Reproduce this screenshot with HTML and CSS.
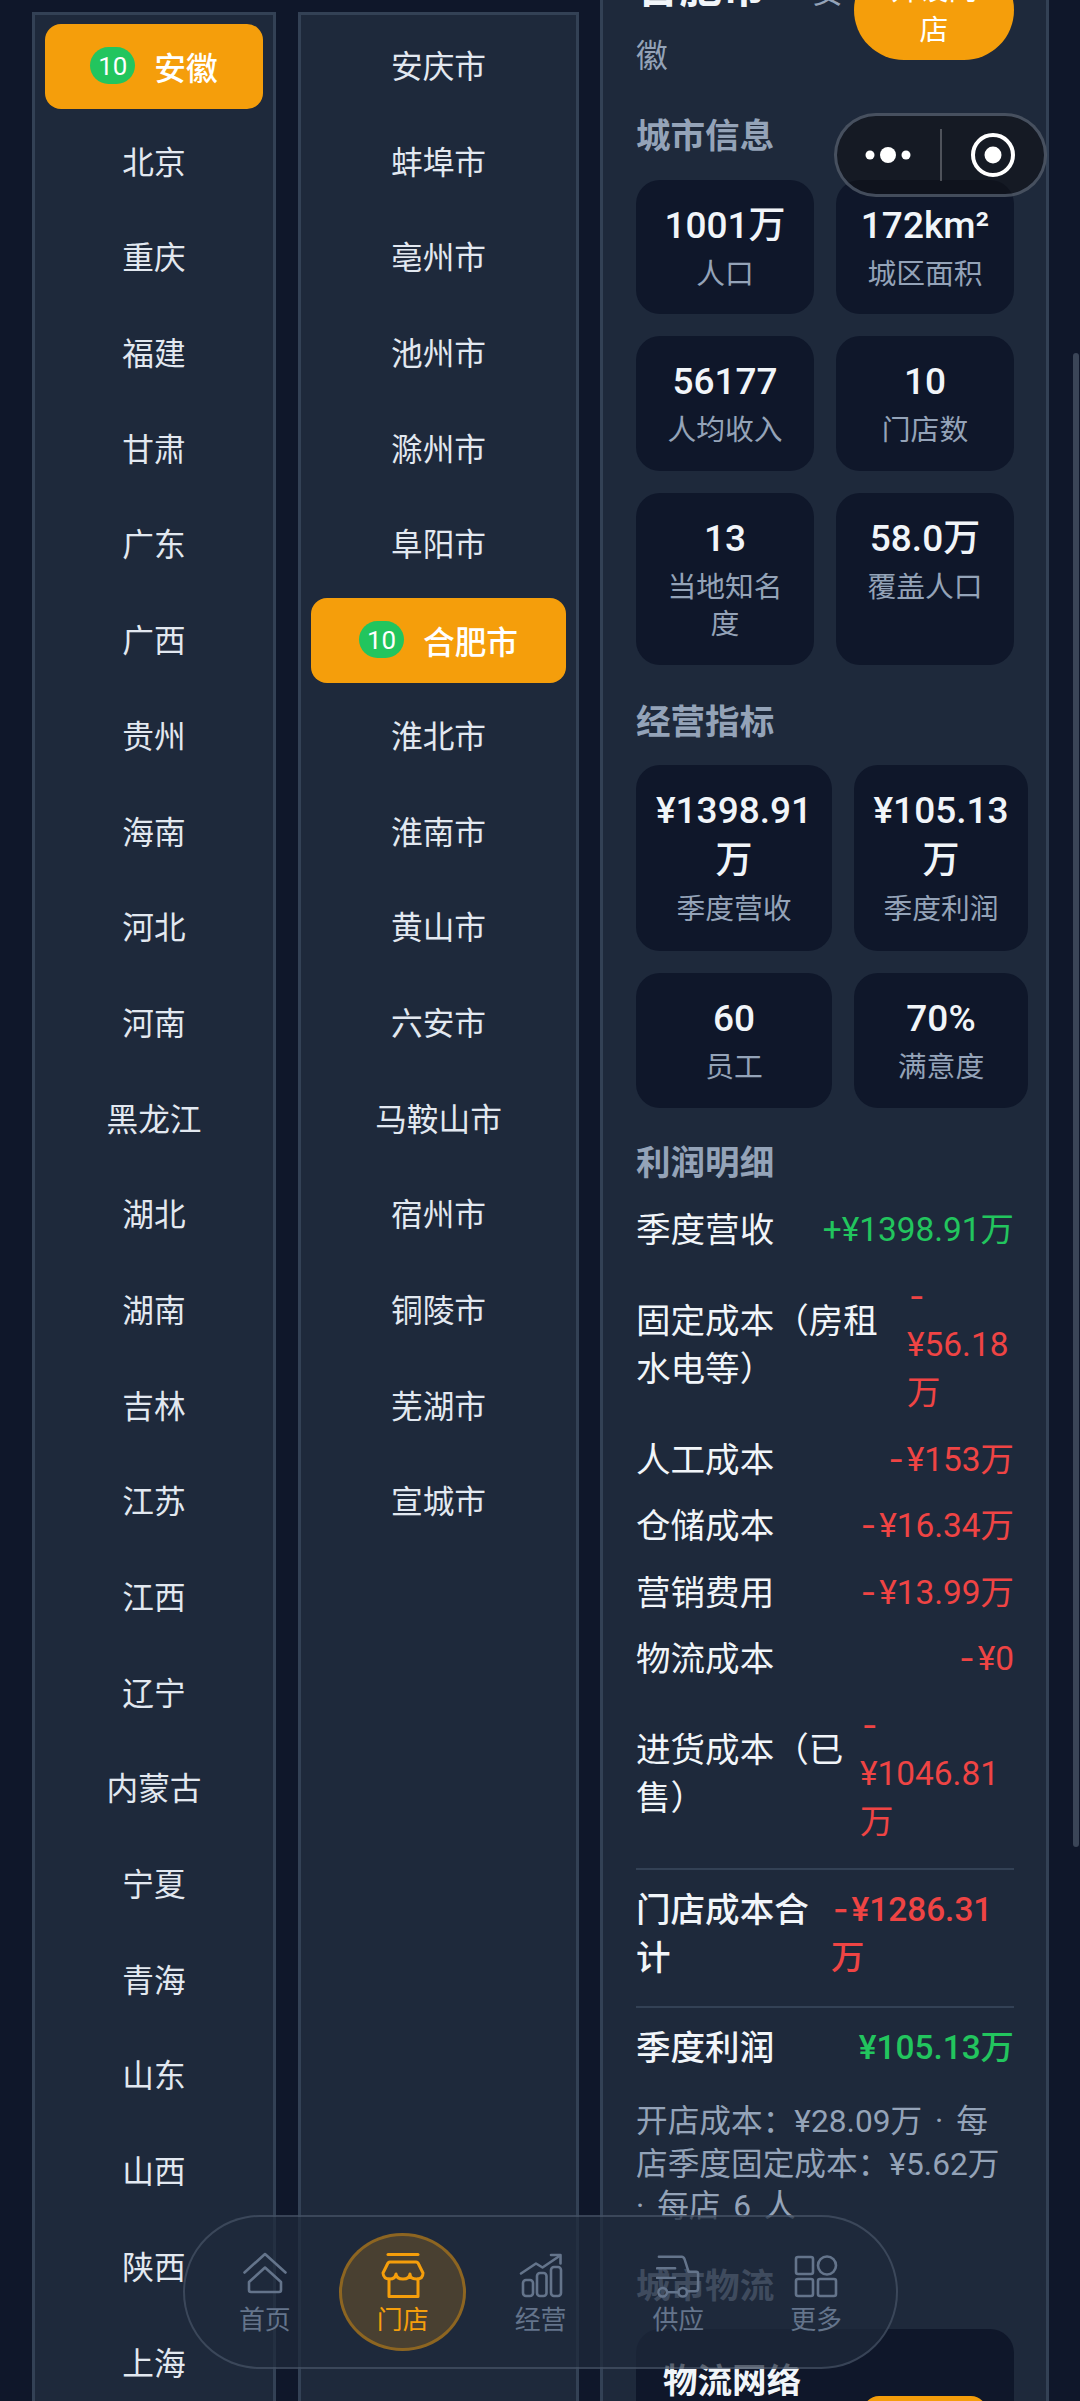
FILE: index.html
```html
<!DOCTYPE html>
<html lang="zh-CN">
<head>
<meta charset="UTF-8">
<meta name="viewport" content="width=device-width, initial-scale=1.0">
<title>门店</title>
<link rel="stylesheet" href="styles.css">
</head>
<body>
<div class="page">
    <div class="columns">
        <div class="col col-province">
            <div class="item active"><span class="badge">10</span>安徽</div>
            <div class="item">北京</div>
            <div class="item">重庆</div>
            <div class="item">福建</div>
            <div class="item">甘肃</div>
            <div class="item">广东</div>
            <div class="item">广西</div>
            <div class="item">贵州</div>
            <div class="item">海南</div>
            <div class="item">河北</div>
            <div class="item">河南</div>
            <div class="item">黑龙江</div>
            <div class="item">湖北</div>
            <div class="item">湖南</div>
            <div class="item">吉林</div>
            <div class="item">江苏</div>
            <div class="item">江西</div>
            <div class="item">辽宁</div>
            <div class="item">内蒙古</div>
            <div class="item">宁夏</div>
            <div class="item">青海</div>
            <div class="item">山东</div>
            <div class="item">山西</div>
            <div class="item">陕西</div>
            <div class="item">上海</div>
        </div>
        <div class="col col-city">
            <div class="item">安庆市</div>
            <div class="item">蚌埠市</div>
            <div class="item">亳州市</div>
            <div class="item">池州市</div>
            <div class="item">滁州市</div>
            <div class="item">阜阳市</div>
            <div class="item active"><span class="badge">10</span>合肥市</div>
            <div class="item">淮北市</div>
            <div class="item">淮南市</div>
            <div class="item">黄山市</div>
            <div class="item">六安市</div>
            <div class="item">马鞍山市</div>
            <div class="item">宿州市</div>
            <div class="item">铜陵市</div>
            <div class="item">芜湖市</div>
            <div class="item">宣城市</div>
        </div>
        <div class="detail">
            <div class="detail-inner">
                <div class="shop-head">
                    <div class="shop-title"><span class="city-name">合肥市</span><span class="province">安 徽</span></div>
                    <button class="open-btn">开设门店</button>
                </div>

                <div class="section-title">城市信息</div>
                <div class="stats stats-city">
                    <div class="stat"><div class="stat-value">1001万</div><div class="stat-label">人口</div></div>
                    <div class="stat"><div class="stat-value">172km²</div><div class="stat-label">城区面积</div></div>
                    <div class="stat"><div class="stat-value">56177</div><div class="stat-label">人均收入</div></div>
                    <div class="stat"><div class="stat-value">10</div><div class="stat-label">门店数</div></div>
                    <div class="stat"><div class="stat-value">13</div><div class="stat-label">当地知名度</div></div>
                    <div class="stat"><div class="stat-value">58.0万</div><div class="stat-label">覆盖人口</div></div>
                </div>

                <div class="section-title">经营指标</div>
                <div class="stats stats-business">
                    <div class="stat"><div class="stat-value">¥1398.91<br>万</div><div class="stat-label">季度营收</div></div>
                    <div class="stat"><div class="stat-value">¥105.13<br>万</div><div class="stat-label">季度利润</div></div>
                    <div class="stat"><div class="stat-value">60</div><div class="stat-label">员工</div></div>
                    <div class="stat"><div class="stat-value">70%</div><div class="stat-label">满意度</div></div>
                </div>

                <div class="section-title profit-title">利润明细</div>
                <div class="row"><span>季度营收</span><span class="val green">+¥1398.91万</span></div>
                <div class="row wrap"><span>固定成本（房租<br>水电等）</span><span class="val red w-sm"><span class="dash">-</span><br>¥56.18<br>万</span></div>
                <div class="row"><span>人工成本</span><span class="val red"><span class="dash">-</span>¥153万</span></div>
                <div class="row"><span>仓储成本</span><span class="val red"><span class="dash">-</span>¥16.34万</span></div>
                <div class="row"><span>营销费用</span><span class="val red"><span class="dash">-</span>¥13.99万</span></div>
                <div class="row"><span>物流成本</span><span class="val red"><span class="dash">-</span>¥0</span></div>
                <div class="row wrap"><span>进货成本（已<br>售）</span><span class="val red w-md"><span class="dash">-</span><br>¥1046.81<br>万</span></div>
                <div class="row total"><span>门店成本合<br>计</span><span class="val red w-lg"><span class="dash">-</span>¥1286.31<br>万</span></div>
                <div class="row total profit"><span>季度利润</span><span class="val green">¥105.13万</span></div>
                <div class="note">开店成本：¥28.09万 · 每店季度固定成本：¥5.62万 · 每店 6 人</div>

                <div class="section-title logistics-title">城市物流</div>
                <div class="logistics">
                    <span class="logistics-name">物流网络</span>
                    <button class="logistics-btn"></button>
                </div>
            </div>
        </div>
    </div>

    <div class="scrollbar"></div>

    <div class="capsule">
        <div class="capsule-part">
            <svg width="56" height="24" viewBox="0 0 56 24"><circle cx="10" cy="12" r="4.5" fill="#fff"/><circle cx="28" cy="12" r="8" fill="#fff"/><circle cx="46" cy="12" r="4.5" fill="#fff"/></svg>
        </div>
        <div class="capsule-line"></div>
        <div class="capsule-part">
            <svg width="46" height="46" viewBox="0 0 46 46"><circle cx="23" cy="23" r="20" fill="none" stroke="#fff" stroke-width="4"/><circle cx="23" cy="23" r="8.5" fill="#fff"/></svg>
        </div>
    </div>

    <div class="nav">
        <div class="tab">
            <svg class="tab-icon" viewBox="0 0 44 46"><path d="M1.5 20.5 22 2l20.5 18.5"/><path d="M8 40h28a2 2 0 0 0 2-2v-8L22 15.5 6 30v8a2 2 0 0 0 2 2z"/></svg>
            <span>首页</span>
        </div>
        <div class="tab on">
            <svg class="tab-icon" viewBox="0 0 44 46"><path d="M7 2.5h30"/><path d="M9 10h26q2 0 3 3l4 8q0 6-6.5 6T29 22q-.5 5-7 5t-7-5q-.5 5-6.5 5T2 21l4-8q1-3 3-3z"/><path d="M8 27v17.5h29V27"/></svg>
            <span>门店</span>
        </div>
        <div class="tab">
            <svg class="tab-icon" viewBox="0 0 44 46"><rect x="4" y="28" width="10" height="16" rx="3"/><rect x="18" y="21" width="9.5" height="23" rx="3"/><rect x="32" y="15" width="10" height="29" rx="3"/><path d="M2 21.5 17 11.5l6.5 4L40.5 4"/><path d="M32 3h9.5v8.5"/></svg>
            <span>经营</span>
        </div>
        <div class="tab">
            <svg class="tab-icon" viewBox="0 0 46 46"><path d="M3 4h24q2 0 3 3l4 12.5h8q2 0 2 2V37q0 3-3 3h-7"/><path d="M1 16h19M1 26h19"/><circle cx="7" cy="41" r="4.5"/><circle cx="28" cy="41" r="4.5"/><path d="M12 41h11"/></svg>
            <span>供应</span>
        </div>
        <div class="tab">
            <svg class="tab-icon" viewBox="0 0 44 46"><rect x="2" y="5" width="17" height="17" rx="2"/><circle cx="33" cy="13.5" r="9"/><rect x="2" y="27" width="17" height="17" rx="2"/><rect x="24" y="27" width="18" height="17" rx="2"/></svg>
            <span>更多</span>
        </div>
    </div>
</div>
</body>
</html>
```

FILE: styles.css
```css
* {
    box-sizing: border-box;
}
body {
    margin: 0;
    background-color: #0f172a;
    color: #e2e8f0;
    font-family: Roboto, "Noto Sans CJK SC", sans-serif;
}
.page {
    position: relative;
    width: 1080px;
    height: 2401px;
    overflow: hidden;
}
.columns {
    display: flex;
    height: 2401px;
    padding-left: 32px;
}

/* province and city lists */
.col {
    display: flex;
    flex-direction: column;
    gap: 10.7px;
    margin-top: 12px;
    margin-right: 22px;
    padding: 9px 10px;
    background-color: #1e293b;
    border: 3px solid #334155;
    border-bottom: none;
    overflow: hidden;
}
.col-province {
    width: 244px;
}
.col-city {
    width: 281px;
    margin-right: 21px;
}
.item {
    flex: none;
    display: flex;
    align-items: center;
    justify-content: center;
    height: 85px;
    padding-bottom: 5px;
    border-radius: 16px;
    font-size: 31.68px;
}
.item.active {
    padding-bottom: 2px;
    background-color: #f59e0b;
    color: #fff;
    font-weight: 500;
}
.badge {
    display: flex;
    align-items: center;
    justify-content: center;
    width: 45px;
    height: 37px;
    margin-right: 19px;
    border-radius: 19px;
    background-color: #22c55e;
    font-size: 25.9px;
    font-weight: 400;
}

/* right hand panel, scrolled so its top is cut off */
.detail {
    width: 449px;
    padding: 0 32px 0 33px;
    background-color: #1e293b;
    border-left: 3px solid #334155;
    border-right: 3px solid #334155;
    overflow: hidden;
}
.detail-inner {
    margin-top: -43px;
    width: 378px;
}
.shop-head {
    display: flex;
    align-items: flex-start;
    justify-content: space-between;
    height: 130px;
    margin-bottom: 25px;
}
.shop-title {
    width: 216px;
    line-height: 64px;
    font-size: 31.68px;
    color: #94a3b8;
}
.city-name {
    font-size: 43.2px;
    font-weight: 700;
    color: #f1f5f9;
}
.province {
    margin-left: 46px;
}
.open-btn {
    width: 160px;
    height: 100px;
    margin-top: 3px;
    padding: 0 30px;
    border: none;
    border-radius: 50px;
    background-color: #f59e0b;
    color: #fff;
    font-family: inherit;
    font-size: 28.8px;
    line-height: 40px;
}
.section-title {
    margin: 33px 0 19px;
    font-size: 34.56px;
    font-weight: 700;
    line-height: 48px;
    color: #94a3b8;
}
.shop-head + .section-title {
    margin-top: 0;
    margin-bottom: 20px;
}
.profit-title {
    margin-top: 31px;
}
.stats {
    display: grid;
    gap: 22px;
}
.stats-city {
    grid-template-columns: 178px 178px;
}
.stats-business {
    grid-template-columns: 196px 174px;
}
.stat {
    padding: 21px 18px;
    border-radius: 24px;
    background-color: #0f172a;
    text-align: center;
}
.stats-business .stat {
    padding-bottom: 22.5px;
}
.stat-value {
    font-size: 37px;
    font-weight: 500;
    line-height: 50px;
    color: #f1f5f9;
}
.stat-label {
    margin-top: 5px;
    font-size: 28.8px;
    line-height: 37.4px;
    color: #94a3b8;
}
.row {
    display: flex;
    justify-content: space-between;
    margin-bottom: 18.6px;
    font-size: 34.56px;
    line-height: 48px;
    color: #f1f5f9;
}
.row.wrap {
    align-items: center;
}
.total {
    margin-top: 22px;
    padding-top: 16px;
    border-top: 2px solid #334155;
    font-weight: 500;
}
.profit {
    margin-top: 24px;
    margin-bottom: 0;
}
.val {
    flex: none;
    font-size: 33.4px;
}
.dash {
    padding: 0 3px 0 2px;
    font-family: Inter, sans-serif;
    line-height: 0;
}
.w-sm {
    width: 107px;
}
.w-md {
    width: 154px;
}
.w-lg {
    width: 183px;
}
.green {
    color: #22c55e;
}
.red {
    color: #ef4444;
}
.note {
    margin-top: 29px;
    font-size: 31.68px;
    line-height: 42.5px;
    word-spacing: 5px;
    color: #94a3b8;
}
.logistics-title {
    margin-top: 33px;
}
.logistics {
    display: flex;
    justify-content: space-between;
    height: 200px;
    padding: 28px 27px;
    border-radius: 24px;
    background-color: #0f172a;
}
.logistics-name {
    font-size: 34.56px;
    font-weight: 700;
    line-height: 48px;
    color: #f1f5f9;
}
.logistics-btn {
    width: 124px;
    height: 80px;
    margin-top: 39px;
    border: none;
    border-radius: 16px;
    background-color: #f59e0b;
}

/* overlays */
.scrollbar {
    position: absolute;
    left: 1073px;
    top: 353px;
    width: 6px;
    height: 1494px;
    border-radius: 3px;
    background-color: #3a4557;
}
.capsule {
    position: absolute;
    left: 834px;
    top: 113px;
    display: flex;
    align-items: center;
    width: 213px;
    height: 84px;
    border: 3px solid rgba(148, 163, 184, 0.4);
    border-radius: 42px;
    background-color: rgba(15, 17, 22, 0.6);
}
.capsule-part {
    flex: 1;
    display: flex;
    align-items: center;
    justify-content: center;
}
.capsule-line {
    flex: none;
    width: 2px;
    height: 52px;
    background-color: rgba(255, 255, 255, 0.25);
}
.nav {
    position: absolute;
    left: 183px;
    top: 2215px;
    display: flex;
    align-items: center;
    width: 715px;
    height: 154px;
    padding: 0 11px;
    border: 2px solid rgba(148, 163, 184, 0.25);
    border-radius: 77px;
    background-color: rgba(30, 41, 59, 0.72);
}
.tab {
    flex: 1;
    display: flex;
    flex-direction: column;
    align-items: center;
    justify-content: center;
    height: 118px;
    padding-top: 6px;
    border-radius: 50%;
    font-size: 25.92px;
    line-height: 36px;
    color: #64748b;
}
.tab-icon {
    width: 44px;
    height: 46px;
    margin-bottom: 4px;
    fill: none;
    stroke: #64748b;
    stroke-width: 2.6;
    stroke-linecap: round;
    stroke-linejoin: round;
}
.tab.on {
    flex: none;
    width: 127px;
    margin: 0 5.5px;
    background-color: rgba(245, 158, 11, 0.2);
    border: 3px solid rgba(245, 158, 11, 0.4);
    color: #f59e0b;
}
.tab.on .tab-icon {
    stroke: #f59e0b;
    stroke-width: 3;
}
```
